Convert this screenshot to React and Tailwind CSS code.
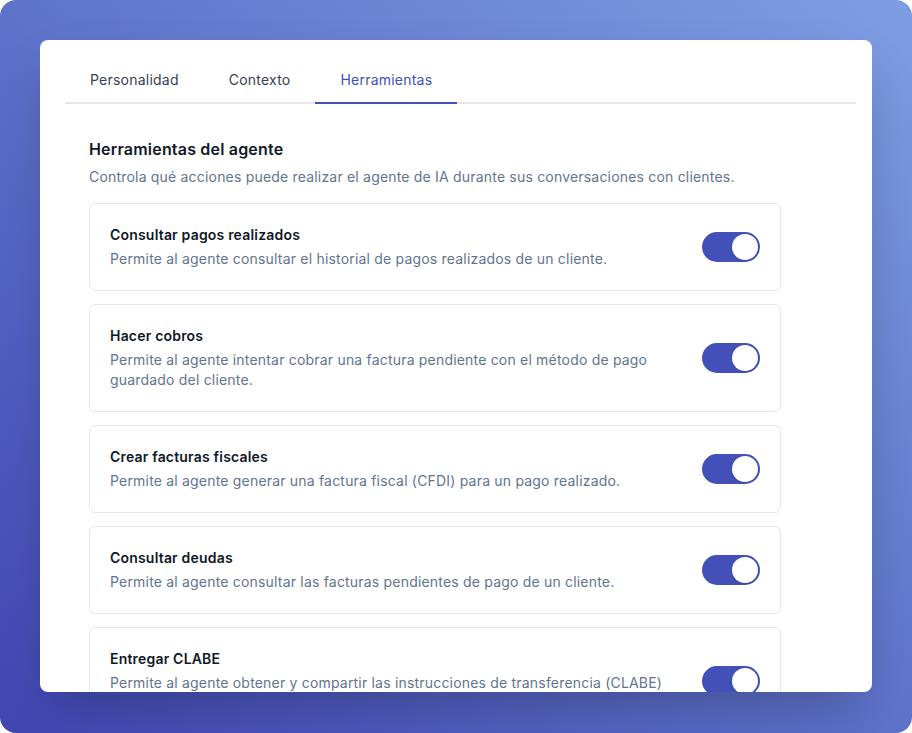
import { useState } from 'react';

const tools = [
  {
    id: 'pagos',
    name: 'Consultar pagos realizados',
    desc: 'Permite al agente consultar el historial de pagos realizados de un cliente.',
  },
  {
    id: 'cobros',
    name: 'Hacer cobros',
    desc: 'Permite al agente intentar cobrar una factura pendiente con el método de pago guardado del cliente.',
  },
  {
    id: 'facturas',
    name: 'Crear facturas fiscales',
    desc: 'Permite al agente generar una factura fiscal (CFDI) para un pago realizado.',
  },
  {
    id: 'deudas',
    name: 'Consultar deudas',
    desc: 'Permite al agente consultar las facturas pendientes de pago de un cliente.',
  },
  {
    id: 'clabe',
    name: 'Entregar CLABE',
    desc: 'Permite al agente obtener y compartir las instrucciones de transferencia (CLABE) para que el cliente realice un pago.',
  },
];

const tabs = ['Personalidad', 'Contexto', 'Herramientas'];

function Toggle({ on, onChange }) {
  return (
    <button
      type="button"
      onClick={onChange}
      className={`flex h-[30px] w-[58px] shrink-0 items-center rounded-full p-[2px] transition-colors ${
        on ? 'bg-[#4350b8] justify-end' : 'bg-gray-300 justify-start'
      }`}
    >
      <span className="h-[26px] w-[26px] rounded-full bg-white shadow-sm"></span>
    </button>
  );
}

export default function App() {
  const [activeTab, setActiveTab] = useState('Herramientas');
  const [enabled, setEnabled] = useState({
    pagos: true,
    cobros: true,
    facturas: true,
    deudas: true,
    clabe: true,
  });

  return (
    <div
      className="h-[733px] w-[912px] overflow-hidden rounded-2xl bg-gradient-to-tr from-[#4146b3] via-[#5f73cb] to-[#7e9ee3] p-10 tracking-[0.012em]"
      style={{ fontFamily: 'Inter, "Noto Sans", sans-serif' }}
    >
      <div className="h-[652px] overflow-hidden rounded-lg bg-white shadow-2xl">
        {/* Tabs */}
        <div className="ml-[25px] mr-4 flex border-b-2 border-gray-200 pt-[18px]">
          {tabs.map((tab) => (
            <button
              key={tab}
              type="button"
              onClick={() => setActiveTab(tab)}
              className={`-mb-[2px] border-b-2 px-[25px] py-3 text-sm leading-5 tracking-[0.016em] ${
                activeTab === tab
                  ? 'border-[#4350b8] text-[#4350b8]'
                  : 'border-transparent text-gray-700'
              }`}
            >
              {tab}
            </button>
          ))}
        </div>

        {/* Content */}
        <div className="pl-[49px] pt-[33px]">
          <h2 className="text-base font-semibold leading-6 text-gray-900">Herramientas del agente</h2>
          <p className="mt-[5px] text-sm leading-[21px] text-slate-500">
            Controla qué acciones puede realizar el agente de IA durante sus conversaciones con clientes.
          </p>

          <div className="mt-4 flex w-[692px] flex-col gap-[13px]">
            {tools.map((tool) => (
              <div
                key={tool.id}
                className="flex items-center gap-4 rounded-md border border-gray-200 px-5 py-[21px]"
              >
                <div className="flex-1">
                  <div className="text-sm font-semibold leading-5 text-gray-900">{tool.name}</div>
                  <div className="mt-1 text-sm leading-5 text-slate-500">{tool.desc}</div>
                </div>
                <Toggle
                  on={enabled[tool.id]}
                  onChange={() => setEnabled({ ...enabled, [tool.id]: !enabled[tool.id] })}
                />
              </div>
            ))}
          </div>
        </div>
      </div>
    </div>
  );
}
